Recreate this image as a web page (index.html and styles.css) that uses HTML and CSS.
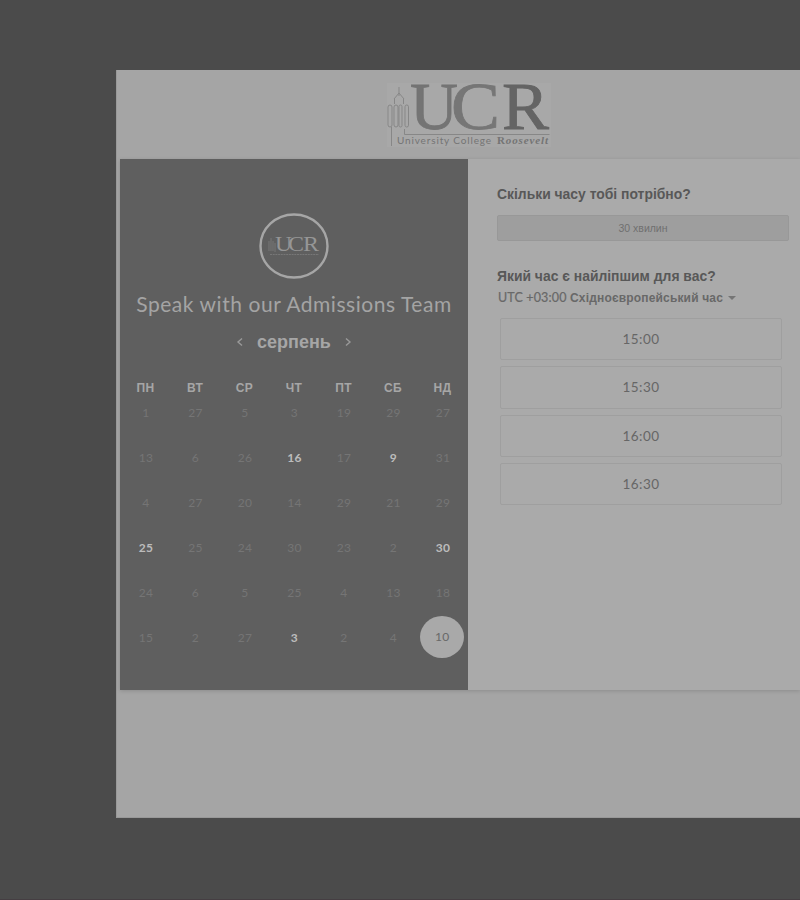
FILE: index.html
```
<!DOCTYPE html>
<html lang="uk">
<head>
<meta charset="utf-8">
<title>UCR</title>
<link rel="stylesheet" href="styles.css">
</head>
<body>
<main class="sheet">
  <header class="brand">
    <svg class="logo" viewBox="0 0 164 64" role="img" aria-label="UCR">
      <g fill="none" stroke="#878787" stroke-width="1">
        <path d="M12 4v9M12 10l-5 6M12 10l5 6M7.500 16v5M16.500 16v5M4.500 44v19M17.500 46v5.500h145"/>
        <rect x="1" y="22" width="4" height="22" rx="2"/>
        <rect x="7" y="22" width="4" height="22" rx="2"/>
        <rect x="12" y="22" width="3" height="22" rx="1.500"/>
        <rect x="18" y="22" width="3.500" height="22" rx="1.700"/>
      </g>
      <g class="logo-letters">
        <text x="23" y="46" textLength="48" lengthAdjust="spacingAndGlyphs" fill="#747474" stroke="#747474">U</text>
        <text x="64" y="46" textLength="49" lengthAdjust="spacingAndGlyphs" fill="#767676" stroke="#767676">C</text>
        <text x="115" y="46" textLength="47" lengthAdjust="spacingAndGlyphs" fill="#646464" stroke="#646464">R</text>
      </g>
      <text class="logo-name" x="10" y="61" textLength="94">University College</text>
      <text class="logo-roosevelt" x="110" y="61" textLength="51"><tspan font-style="normal">R</tspan>oosevelt</text>
    </svg>
  </header>
  <div class="booking">
    <section class="calendar">
      <svg class="avatar" viewBox="0 0 70 66">
        <ellipse cx="35" cy="33" rx="33.500" ry="31.500" fill="none" stroke="#a6a6a6" stroke-width="2.400"/>
        <g class="avatar-letters">
          <text x="16" y="38" textLength="17" lengthAdjust="spacingAndGlyphs">U</text>
          <text x="29" y="38" textLength="16" lengthAdjust="spacingAndGlyphs">C</text>
          <text x="44" y="38" textLength="16" lengthAdjust="spacingAndGlyphs">R</text>
        </g>
        <path d="M10 28v10M12 25v13M14 28v10M16 30v9" stroke="#737373" stroke-width="1.200"/>
        <path d="M11 41.500h49" stroke="#777" stroke-width="1.200" stroke-dasharray="2 .7"/>
      </svg>
      <h1 class="title">Speak with our Admissions Team</h1>
      <div class="month">
        <svg class="arrow" viewBox="0 0 8 10"><path d="M6 1.500 2 5l4 3.500"/></svg>
        <span class="month-name">серпень</span>
        <svg class="arrow" viewBox="0 0 8 10"><path d="m2 1.500 4 3.500-4 3.500"/></svg>
      </div>
      <div class="weekdays">
        <span>ПН</span><span>ВТ</span><span>СР</span><span>ЧТ</span><span>ПТ</span><span>СБ</span><span>НД</span>
      </div>
      <div class="days">
        <span>1</span><span>27</span><span>5</span><span>3</span><span>19</span><span>29</span><span>27</span>
        <span>13</span><span>6</span><span>26</span><span class="open">16</span><span>17</span><span class="open">9</span><span>31</span>
        <span>4</span><span>27</span><span>20</span><span>14</span><span>29</span><span>21</span><span>29</span>
        <span class="open">25</span><span>25</span><span>24</span><span>30</span><span>23</span><span>2</span><span class="open">30</span>
        <span>24</span><span>6</span><span>5</span><span>25</span><span>4</span><span>13</span><span>18</span>
        <span>15</span><span>2</span><span>27</span><span class="open">3</span><span>2</span><span>4</span><span class="selected">10</span>
      </div>
    </section>
    <section class="times">
      <h2 class="question">Скільки часу тобі потрібно?</h2>
      <div class="duration">30 хвилин</div>
      <h2 class="question">Який час є найліпшим для вас?</h2>
      <div class="zone"><span class="offset">UTC +03:00</span><span class="zone-name">Східноєвропейський час</span><i class="caret"></i></div>
      <div class="slots">
        <div class="slot">15:00</div>
        <div class="slot">15:30</div>
        <div class="slot">16:00</div>
        <div class="slot">16:30</div>
      </div>
    </section>
  </div>
</main>
</body>
</html>
```
FILE: styles.css
```
* { box-sizing: border-box; }
html { height: 100%; overflow: hidden; background: #4b4b4b; }
body {
  margin: 0;
  height: 900px;
  padding: 70px 0 0 116px;
  overflow: hidden;
  border-bottom: 1px solid #453e42;
  background: #4b4b4b;
  font-family: Lato, "Liberation Sans", sans-serif;
}
.sheet {
  width: 684px;
  height: 748px;
  background: #a5a5a5;
  border-left: 1px solid #999;
  border-bottom: 1px solid #989898;
}
.brand { height: 89px; padding: 13px 0 0 270px; }
.logo { display: block; width: 164px; height: 64px; background: #a8a8a8; }
.logo-letters { font: 68px "Liberation Serif", serif; stroke-width: .8px; }
.logo-name { font: 10px Lato, sans-serif; fill: #747474; }
.logo-roosevelt { font: italic bold 11px "Liberation Serif", serif; fill: #747474; }
.booking {
  display: flex;
  height: 531px;
  margin-left: 3px;
  background: #aaa;
  box-shadow: 0 1px 4px rgba(0, 0, 0, .15);
}
.calendar {
  display: flex;
  flex-direction: column;
  align-items: center;
  width: 348px;
  padding-top: 54px;
  background: #5f5f5f;
}
.avatar { width: 70px; height: 66px; flex: none; }
.avatar-letters { font: 22px "Liberation Serif", serif; fill: #969696; }
.title {
  margin: 11px 0 0;
  font-size: 21px;
  font-weight: 400;
  line-height: 28px;
  letter-spacing: .55px;
  white-space: nowrap;
  color: #a4a4a4;
}
.month { display: flex; align-items: center; gap: 13px; height: 24px; margin-top: 12px; }
.month-name { font: bold 18px/24px "Liberation Sans", sans-serif; color: #a6a6a6; }
.arrow { width: 8px; height: 10px; fill: none; stroke: #999; stroke-width: 1.4; }
.weekdays, .days { display: grid; grid-template-columns: repeat(7, 49.5px); text-align: center; }
.weekdays {
  margin-top: 24px;
  font: bold 12px/20px "Liberation Sans", sans-serif;
  letter-spacing: .3px;
  color: #a6a6a6;
}
.days {
  grid-auto-rows: 45px;
  margin: -8px 0 0 1px;
  font-size: 12px;
  line-height: 45px;
  letter-spacing: .3px;
  color: #757575;
}
.open { color: #bcbcbc; font-weight: 700; }
.selected {
  width: 44px;
  height: 42px;
  margin: 1px 0 0 2px;
  border-radius: 50%;
  background: #a9a9a9;
  line-height: 41px;
  color: #686868;
}
.times { flex: 1; padding: 25px 11px 0 29px; }
.question { margin: 0; font: bold 13.9px/20px "Liberation Sans", sans-serif; color: #585858; }
.duration {
  height: 26px;
  margin: 11px 0 25px;
  border: 1px solid #989898;
  border-radius: 2px;
  background: #9e9e9e;
  text-align: center;
  font: 10.5px/25px "Liberation Sans", sans-serif;
  color: #707070;
}
.zone { display: flex; align-items: center; height: 23px; color: #686868; white-space: nowrap; }
.offset { width: 73px; padding-left: 1px; font-size: 12.5px; letter-spacing: .15px; -webkit-text-stroke: .2px #686868; }
.zone-name { font: bold 12px/22px "Liberation Sans", sans-serif; letter-spacing: .17px; }
.caret { margin-left: 5px; border: 4px solid transparent; border-top-color: #757575; border-bottom: 0; }
.slots { display: grid; gap: 6px; margin: 9px 7px 0 3px; }
.slot {
  height: 42.3px;
  border: 1px solid #9f9f9f;
  border-radius: 2px;
  line-height: 40px;
  text-align: center;
  font-size: 13.5px;
  letter-spacing: .5px;
  color: #666;
}
```
